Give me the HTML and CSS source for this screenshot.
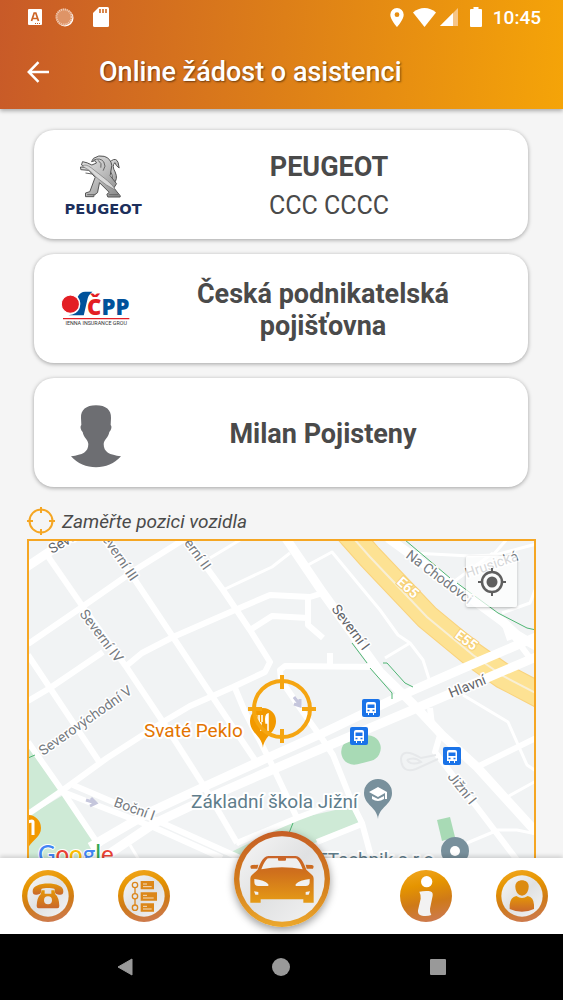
FILE: index.html
```html
<!DOCTYPE html>
<html lang="cs">
<head>
  <meta charset="UTF-8" />
  <meta name="viewport" content="width=device-width, initial-scale=1.0" />
  <title>Online žádost o asistenci</title>
  <link rel="stylesheet" href="styles.css">
</head>
<body>
  <!-- shared gradients -->
  <svg class="defs" width="0" height="0" aria-hidden="true">
    <defs>
      <linearGradient id="ring" x1="0.3" y1="0" x2="0.5" y2="1">
        <stop offset="0" stop-color="#f0a51c" />
        <stop offset="0.3" stop-color="#e59400" />
        <stop offset="0.65" stop-color="#cf7a18" />
        <stop offset="1" stop-color="#cd7a4c" />
      </linearGradient>
      <linearGradient id="ring-big" x1="0" y1="0" x2="0" y2="1">
        <stop offset="0" stop-color="#c65f26" />
        <stop offset="0.5" stop-color="#d17a1c" />
        <stop offset="1" stop-color="#eca82c" />
      </linearGradient>
      <linearGradient id="plate" x1="0" y1="0" x2="1" y2="1">
        <stop offset="0" stop-color="#f6f6f6" />
        <stop offset="0.5" stop-color="#e0e1e2" />
        <stop offset="1" stop-color="#f4f4f4" />
      </linearGradient>
      <linearGradient id="glyph" x1="0" y1="0" x2="0" y2="1">
        <stop offset="0" stop-color="#e59706" />
        <stop offset="1" stop-color="#c9672c" />
      </linearGradient>
      <linearGradient id="car" gradientUnits="userSpaceOnUse" x1="844" y1="90" x2="844" y2="236">
        <stop offset="0" stop-color="#c8622a" />
        <stop offset="0.35" stop-color="#cf6f1c" />
        <stop offset="1" stop-color="#e69c16" />
      </linearGradient>
      <linearGradient id="metal" x1="0" y1="0" x2="1" y2="1">
        <stop offset="0" stop-color="#e8e8e8" />
        <stop offset="0.5" stop-color="#bdbdbd" />
        <stop offset="1" stop-color="#858585" />
      </linearGradient>
    </defs>
  </svg>

  <header class="header">
    <div class="status-bar">
      <div class="status-left">
        <svg width="14" height="17" viewBox="0 0 14 17"><rect width="14" height="16" rx="1" fill="#fff" /><path d="M3.5 12 6.2 4h1.6l2.7 8M4.6 9.5h4.8" fill="none" stroke="#cd6425" stroke-width="1.7" /><path d="M7 14.5h6" stroke="#cd6425" stroke-dasharray="1 1" /></svg>
        <svg width="19" height="19" viewBox="0 0 19 19"><circle cx="10" cy="10" r="8.5" fill="#fff" /><circle cx="9" cy="9" r="8.5" fill="#de9467" /><circle cx="9" cy="9" r="7.5" fill="none" stroke="#f1cdb8" stroke-width="2" stroke-dasharray="1 1" /></svg>
        <svg width="16" height="20" viewBox="0 0 16 20"><path d="M6 0h8.500q1.500 0 1.500 1.500v17q0 1.500-1.500 1.500H1.500Q0 20 0 18.500V6z" fill="#fff" /><path d="M7 2v4M10 2v4M13 2v4" stroke="#d06a22" stroke-width="1.600" /></svg>
      </div>
      <div class="status-right">
        <svg class="pin" width="14" height="19" viewBox="0 0 14 19"><path d="M7 0a6.700 6.700 0 0 0-6.700 6.700C.300 11.500 7 19 7 19s6.700-7.500 6.700-12.300A6.700 6.700 0 0 0 7 0m0 4.300a2.400 2.400 0 1 1 0 4.800 2.400 2.400 0 0 1 0-4.800" fill="#fff" /></svg>
        <svg width="23" height="19" viewBox="0 0 23 19"><path d="M11.500 19 0 4.500C6.500-1.500 16.500-1.500 23 4.500z" fill="#fff" /></svg>
        <svg class="signal" width="18" height="18" viewBox="0 0 18 18"><path d="M18 0v18H0z" fill="#f6c588" /><path d="M13 5v13H0z" fill="#fff" /></svg>
        <svg class="battery" width="12" height="20" viewBox="0 0 12 20"><path d="M3.500 0h5v2H11q1 0 1 1v16q0 1-1 1H1q-1 0-1-1V3q0-1 1-1h2.500z" fill="#fff" /></svg>
        <span class="clock">10:45</span>
      </div>
    </div>
    <div class="toolbar">
      <button type="button" class="back" aria-label="Zpět">
        <svg width="22" height="22" viewBox="0 0 22 22"><path d="M11.500 1.200 1.800 11l9.700 9.800M2 11h20" fill="none" stroke="#fff" stroke-width="2.500" /></svg>
      </button>
      <h1>Online žádost o asistenci</h1>
    </div>
  </header>

  <main class="content">
    <div class="cards">
      <section class="card card-vehicle">
        <svg width="99" height="60" viewBox="65 105 296 180" role="img" aria-label="Peugeot">
          <g fill="url(#metal)" stroke="#555" stroke-width="3" stroke-linejoin="round">
            <path d="M258 122q14-10 20 6l3 16-8-7-5-9q-10 10 1 28 10 22-5 34l-9-9q10-8 1-24-14-25 2-35z" />
            <path d="M198 125l6-10q16-11 32-6 20 6 23 27l-5 31 19 24-8 13 19 23v4h-37l-3-8 7-6-29-29-6 30-11 8v4h-25v-11l13-4 16-43-19-21-24-2-1-8 17 1-14-7 3-10q14 2 28 10l14-6-4-7z" />
          </g>
          <path d="M170 138q10-8 28 6l48 38q19 17 25 29-29-14-56-37l-22-22z" fill="#d9d9d9" stroke="#777" stroke-width="2" />
          <path d="M203 121q21-10 32 5 8 12-2 26m-15-31q13 9 8 22M180 159l20 3M185 224h25M251 224h27" fill="none" stroke="#666" stroke-width="3" />
          <text class="peugeot-name" x="233" y="282" text-anchor="middle">PEUGEOT</text>
        </svg>
        <div class="card-text">
          <h2>PEUGEOT</h2>
          <p>CCC CCCC</p>
        </div>
      </section>
      <section class="card">
        <svg width="72" height="37" viewBox="105 510 215 110" role="img" aria-label="ČPP">
          <path d="M158 530q8-15 22-15h22q-13 9-16 27l-10 43h-46q26-2 33-20 7-18-5-35z" fill="#00529b" />
          <circle cx="136" cy="552" r="27" fill="#e31e24" stroke="#fff" stroke-width="3" />
          <text class="cpp-name" x="186" y="585"><tspan fill="#e31e24">Č</tspan><tspan fill="#00529b">PP</tspan></text>
          <path d="M114 595h198" stroke="#e31e24" stroke-width="4" />
          <text class="cpp-sub" x="213" y="615" text-anchor="middle">IENNA INSURANCE GROU</text>
        </svg>
        <div class="card-text">
          <h2>Česká podnikatelská pojišťovna</h2>
        </div>
      </section>
      <section class="card">
        <svg width="52" height="70" viewBox="135 95 156 210" aria-hidden="true">
          <path d="M213 117c-30 0-46 14-45 38l1 21c-5 4-1 17 4 21 3 17 16 23 17 36 0 25-17 32-52 37 38 44 112 44 150 0-35-5-52-12-52-37 1-13 14-19 17-36 5-4 9-17 4-21l1-21c1-24-15-38-45-38z" fill="#6d6e72" />
        </svg>
        <div class="card-text">
          <h2>Milan Pojisteny</h2>
        </div>
      </section>
    </div>

    <p class="hint">
      <svg width="28" height="28" viewBox="0 0 28 28" aria-hidden="true"><circle cx="14" cy="14" r="11.500" /><path d="M14 0v6M14 22v6M0 14h6M22 14h6" /></svg>
      <span>Zaměřte pozici vozidla</span>
    </p>

    <div class="map">
      <svg class="map-canvas" viewBox="29 541 505 317" preserveAspectRatio="xMidYMin slice">
        <!-- parks -->
        <g fill="#ceead6">
          <path d="M28 744l35 48-35 24zM28 816l37-22 34 50-14 14H28z" />
          <path d="M225 855l75-37 53-12 8 17-81 35z" />
        </g>
        <g fill="#a8dab5">
          <rect x="341" y="737" width="40" height="26" rx="13" transform="rotate(-15 361 750)" />
          <path d="M437 820l13-3 5 20-13 4z" />
        </g>
        <!-- motorway -->
        <path class="motorway-edge" d="M338 521L355 540 370 557 427 617 473 655 503 676 545 698" />
        <path class="motorway" d="M338 521L355 540 370 557 427 617 473 655 503 676 545 698" />
        <path class="motorway-gap" d="M338 521L355 540 370 557 427 617 473 655 503 676 545 698" />
        <!-- streets -->
        <g class="street thin">
          <path d="M210 558L240 540M223 590L272 567 290 553M308 565L332 552 380 610 398 635 410 643 423 660 430 682M410 643L385 658" />
          <path d="M413 553L470 556 495 555 540 543M493 555L508 538M502 613L530 603 535 590M452 583L493 553" />
          <path d="M463 695L508 722 527 765 536 771M507 797L536 781M467 843L498 830 517 830 536 834" />
          <path d="M242 840L237 845M130 845L139 860" />
        </g>
        <g class="street">
          <path d="M47 555L83 607 127 668 163 722 202 783 237 843" />
          <path d="M28 655L50 688 100 763M103 538L135 580 173 637 218 705 257 763" />
          <path d="M28 644L82 607 135 570 183 540M28 701L50 688 103 652" />
          <path d="M125 667L142 653 173 637 235 610 270 595 310 597 323 593" />
          <path d="M183 535L223 590 250 630 270 662 265 672 233 687 190 706 163 722 107 758 63 790 28 814" />
          <path d="M308 597L308 625 323 638M250 630L272 616 308 618M330 653L330 666M380 667L285 666 280 670 281 680 300 708 323 740 333 755 353 805 362 823 372 860" />
          <path d="M235 688L245 712 262 745 273 767 297 818M237 843L297 818 345 800M317 842L362 824" />
          <path d="M28 742L63 792 100 847M73 785L160 822 240 858M63 792L153 827 222 858" />
          <path d="M477 767L536 738M430 708L432 725 440 735 435 752 470 798 517 860" />
          <path d="M503 619L510 640M503 622L530 658" />
        </g>
        <g class="street wide">
          <path d="M25 568L46 554 74 536M285 537L323 593 380 672 413 704 442 735 477 767 536 832" />
          <path d="M388 538L453 585 503 622 517 635 536 646" />
          <path d="M536 637L473 664 400 696 323 733 267 758 210 784 150 812 90 847" />
          <path d="M536 657L473 684 410 711 323 748 267 772 210 797 155 823 100 860" />
        </g>
        <path class="loop" d="M436 755l-15 3q-19-11-20 1 1 15 15 10l22-10M407 760q8-4 14 2-10 4-14-2" />
        <!-- footpaths -->
        <g class="path">
          <path d="M405 540L450 578M457 583L498 613 527 628 536 630M352 643L367 663M370 668L392 693v6M383 663h4l18 20 8 4M293 823l-4 10M28 758l7-3" />
        </g>
        <!-- one way arrows -->
        <g fill="none" stroke="#c5c6dc" stroke-width="3">
          <path d="M294 697l6 8m-6-1l6 2 0-7M86 800l10 3m-5-5l5 5-6 3" />
        </g>

        <!-- street names -->
        <g class="label">
          <text class="dark" transform="translate(52 554) rotate(-30)">Severní IV</text>
          <text transform="translate(131 582) rotate(56)" text-anchor="end">Severní III</text>
          <text transform="translate(204 571) rotate(54)" text-anchor="end">Severní II</text>
          <text transform="translate(79 614) rotate(53)">Severní IV</text>
          <text class="dark" transform="translate(331 609) rotate(53)">Severní I</text>
          <text transform="translate(43 756) rotate(-35)">Severovýchodní V</text>
          <text transform="translate(113 806) rotate(20)">Boční I</text>
          <text class="dark" transform="translate(451 698) rotate(-22)">Hlavní</text>
          <text transform="translate(405 557) rotate(37)">Na Chodovci</text>
          <text transform="translate(467 578) rotate(-19)">Hrusická</text>
          <text transform="translate(447 777) rotate(51)">Jižní I</text>
        </g>
        <g class="road-no">
          <text transform="translate(396 583) rotate(42)">E65</text>
          <text transform="translate(454 637) rotate(36)">E55</text>
        </g>

        <!-- bus stops -->
        <g id="bus">
          <rect x="362" y="699" width="18" height="18" rx="2" fill="#1a73e8" />
          <path d="M366 704q0-2 2-2h6q2 0 2 2v9h-2v2h-1v-2h-4v2h-1v-2h-2zm1.500.500v3.500h7v-3.500z" fill="#fff" fill-rule="evenodd" />
          <path d="M367.500 710.500h2M372.500 710.500h2" stroke="#1a73e8" stroke-width="1.500" />
        </g>
        <use href="#bus" x="-12" y="28" />
        <use href="#bus" x="81" y="48" />

        <!-- places -->
        <g class="place">
          <text class="food" x="144" y="737">Svaté Peklo</text>
          <text x="191" y="808">Základní škola Jižní</text>
          <text x="434" y="866" text-anchor="end">TTechnik s.r.o</text>
        </g>
        <g>
          <path d="M263 748c-1-12-13-15-13-27a13 13 0 0 1 26 0c0 12-12 15-13 27z" fill="#f29900" />
          <path d="M259 715v6q0 2 2 2v8M262 715v7M256.500 715v5q0 2 3 2M268 731v-8h-2q-1-8 2-9z" fill="#fff" stroke="#fff" stroke-width="1.500" />
          <path d="M28 848c5-9 13-11 13-20a13 13 0 0 0-13-13z" fill="#f29900" />
          <path d="M28 822q5-2 5 0v13" fill="none" stroke="#fff" stroke-width="3" />
          <path d="M378 819c-1-12-14-14-14-26a14 14 0 0 1 28 0c0 12-13 14-14 26z" fill="#78909c" />
          <path d="M378 787l-9 5 9 5 7-4v6h2v-7zM372 796v3q6 4 12 0v-3l-6 3z" fill="#fff" />
          <circle cx="455" cy="851" r="14" fill="#78909c" />
          <circle cx="455" cy="851" r="5" fill="#fff" />
        </g>

        <!-- selected position -->
        <g fill="none" stroke="#f5a511" stroke-width="4">
          <circle cx="282" cy="709" r="28" />
          <path d="M282 675v14M282 729v14M248 709h14M302 709h14" />
        </g>
        <text class="google" x="38" y="863"><tspan fill="#4285f4">G</tspan><tspan fill="#ea4335">o</tspan><tspan fill="#fbbc04">o</tspan><tspan fill="#4285f4">g</tspan><tspan fill="#34a853">l</tspan><tspan fill="#ea4335">e</tspan></text>
      </svg>
      <button type="button" class="locate" aria-label="Moje poloha">
        <svg width="28" height="28" viewBox="0 0 28 28"><circle cx="14" cy="14" r="10" fill="none" stroke="#5f5f5f" stroke-width="2.500" /><circle cx="14" cy="14" r="5.500" fill="#5f5f5f" /><path d="M14 0v4M14 24v4M0 14h4M24 14h4" stroke="#5f5f5f" stroke-width="2" /></svg>
      </button>
    </div>
  </main>

  <nav class="tabs">
    <div class="tab-group">
      <button type="button" aria-label="Telefon">
        <svg viewBox="67 134 156 156">
          <circle cx="145" cy="212" r="78" fill="url(#ring)" />
          <circle cx="145" cy="212" r="62" fill="url(#plate)" />
          <path d="M99 198c-2-31 94-31 92 0 0 9-4 11-13 10-8-1-14-3-13-17-9-4-31-4-40 0 1 14-5 16-13 17-9 1-13-1-13-10z" fill="url(#glyph)" />
          <path d="M126 195h9v10h20v-10h9l3 12q11 9 12 35 0 7-6 7h-56q-6 0-6-7 1-26 12-35z" fill="url(#glyph)" />
          <circle cx="145" cy="225" r="12" fill="#e6e6e6" />
        </svg>
      </button>
      <button type="button" aria-label="Průběh">
        <svg viewBox="354 134 156 156">
          <circle cx="432" cy="212" r="78" fill="url(#ring)" />
          <circle cx="432" cy="212" r="62" fill="url(#plate)" />
          <g fill="none" stroke="#db861c" stroke-width="4"><circle cx="405" cy="179" r="8" /><circle cx="405" cy="213" r="8" /><circle cx="405" cy="247" r="8" /><path d="M405 187v18M405 221v18" /></g>
          <path d="M422 167h40v25h-40zM422 201h49v25h-49zM422 234h40v25h-40z" fill="#dc8719" />
          <path d="M429 176h12M429 184h26M429 210h12M429 218h32M429 243h12M429 251h26" stroke="#f3dfc4" stroke-width="3" />
        </svg>
      </button>
    </div>
    <button type="button" class="tab-main" aria-label="Asistence">
      <svg viewBox="700 19 288 288">
        <circle cx="844" cy="163" r="144" fill="url(#ring-big)" />
        <circle cx="844" cy="163" r="128" fill="url(#plate)" />
        <path d="M771 135q10-28 20-36 5-5 12-5h82q7 0 12 5 10 8 20 36l18 17q4 4 4 10v72h-31v-10H780v10h-31v-72q0-6 4-10z" fill="url(#car)" />
        <path d="M782 134q7-20 15-29 3-4 8-4h27v4q0 3 3 3h18q3 0 3-3v-4h27q5 0 8 4 8 9 15 29-62-12-124 0z" fill="#efefef" />
        <path d="M749 126q0-4 6-5l18-1-3 12h-19zM939 126q0-4-6-5l-18-1 3 12h19z" fill="#cc6b20" />
        <path d="M761 163q30 3 42 16v5h-30q-12 0-12-11zM927 163q-30 3-42 16v5h30q12 0 12-11zM760 200l13 2v8h-9zM928 200l-13 2v8h9z" fill="#f1f1f1" />
      </svg>
    </button>
    <div class="tab-group tab-group-right">
      <button type="button" aria-label="Informace">
        <svg viewBox="359 134 156 156">
          <circle cx="437" cy="212" r="78" fill="url(#ring)" />
          <circle cx="439" cy="169" r="17" fill="#fff" />
          <path d="M417 199q13-3 28-2 14 1 12 14l-8 39q-1 12 4 19-12 4-28 2-14-2-12-16l8-35q1-12-4-21z" fill="#f2f2f2" />
        </svg>
      </button>
      <button type="button" aria-label="Profil">
        <svg viewBox="649 134 156 156">
          <circle cx="727" cy="212" r="78" fill="url(#ring)" />
          <circle cx="727" cy="212" r="62" fill="url(#plate)" />
          <path d="M707 183c0-24 40-24 40 0 0 14-7 28-20 28s-20-14-20-28z" fill="#dc8b10" />
          <path d="M710 212q17 12 34 0 18 4 19 26v13q-36 17-73 0v-13q2-22 20-26z" fill="url(#glyph)" />
        </svg>
      </button>
    </div>
  </nav>

  <div class="system-nav">
    <button type="button" aria-label="Zpět"><svg width="18" height="18" viewBox="0 0 18 18"><path d="M16 1v16L2 9z" fill="#999" stroke="#999" stroke-linejoin="round" /></svg></button>
    <button type="button" aria-label="Domů"><svg width="18" height="18" viewBox="0 0 18 18"><circle cx="9" cy="9" r="9" fill="#999" /></svg></button>
    <button type="button" aria-label="Přehled"><svg width="18" height="18" viewBox="0 0 18 18"><rect x="1" y="1" width="16" height="16" rx="1" fill="#999" /></svg></button>
  </div>
</body>
</html>
```

FILE: styles.css
```css
* {
  box-sizing: border-box;
}
body {
  margin: 0;
  height: 100vh;
  display: flex;
  flex-direction: column;
  background-color: #f5f5f5;
  font-family: Roboto, sans-serif;
  color: #4a4a4a;
}
h1, h2, p {
  margin: 0;
}
button {
  padding: 0;
  border: none;
  background: none;
  cursor: pointer;
}
svg {
  display: block;
}
.defs {
  position: absolute;
}

/* header */
.header {
  flex: none;
  background: linear-gradient(95deg, #c85a28, #dd7f18 50%, #f5a408);
  color: #fff;
  box-shadow: 0 2px 4px rgba(0, 0, 0, 0.3);
  z-index: 1;
}
.status-bar {
  height: 34px;
  padding: 0 22px 0 28px;
  display: flex;
  justify-content: space-between;
  align-items: center;
}
.status-left, .status-right {
  display: flex;
  align-items: center;
}
.status-left {
  gap: 13px;
}
.status-left svg:last-child {
  margin-left: 6px;
}
.pin {
  margin-right: 9px;
}
.signal {
  margin: 0 12px 0 4px;
}
.battery {
  margin-right: 11px;
}
.clock {
  font-size: 19px;
  font-weight: 500;
}
.toolbar {
  height: 75px;
  padding: 0 27px;
  display: flex;
  align-items: center;
  gap: 50px;
}
.toolbar h1 {
  font-size: 27px;
  font-weight: 500;
  text-shadow: 1px 1px 2px rgba(0, 0, 0, 0.5);
}

/* content */
.content {
  flex: 1;
  min-height: 0;
  padding-top: 21px;
  display: flex;
  flex-direction: column;
  overflow: hidden;
}
.cards {
  flex: none;
  padding: 0 35px 0 34px;
  display: flex;
  flex-direction: column;
  gap: 15px;
}
.card {
  min-height: 109px;
  padding-right: 40px;
  display: grid;
  grid-template-columns: 124px 1fr;
  align-items: center;
  justify-items: center;
  background-color: #fff;
  border-radius: 20px;
  box-shadow: 0 1px 4px rgba(0, 0, 0, 0.35);
}
.card-vehicle {
  padding-right: 28px;
}
.card > svg {
  overflow: visible;
}
.card-text {
  padding-top: 3px;
  text-align: center;
}
.card h2 {
  font-size: 27px;
  line-height: 32px;
  font-weight: 700;
}
.card p {
  margin-top: 7px;
  font-size: 25px;
  line-height: 32px;
}
.peugeot-name {
  font: bold 44px "DejaVu Sans", sans-serif;
  fill: #1d2f5c;
}
.cpp-name {
  font: 800 66px "Open Sans", sans-serif;
}
.cpp-sub {
  font: 16px Roboto, sans-serif;
  fill: #333;
}
.hint {
  flex: none;
  padding: 20px 27px 4px;
  display: flex;
  align-items: center;
  gap: 7px;
  font-size: 19px;
  font-style: italic;
}
.hint svg {
  fill: none;
  stroke: #f5a623;
  stroke-width: 2;
}

/* map */
.map {
  flex: 1;
  min-height: 0;
  margin: 0 27px;
  position: relative;
  border: 2px solid #f5a623;
  border-bottom: none;
  background-color: #f1f3f4;
  overflow: hidden;
}
.map-canvas {
  width: 100%;
  height: 100%;
}
.street {
  fill: none;
  stroke: #fff;
  stroke-width: 6;
  stroke-linejoin: round;
}
.street.thin {
  stroke-width: 3;
}
.street.wide {
  stroke-width: 9;
}
.motorway, .motorway-edge, .motorway-gap {
  fill: none;
  stroke: #fde293;
  stroke-width: 24;
}
.motorway-edge {
  stroke: #f9d27c;
  stroke-width: 26;
}
.motorway-gap {
  stroke: #f8efd6;
  stroke-width: 2;
}
.loop {
  fill: none;
  stroke: #e6e8ea;
  stroke-width: 2;
}
.path {
  fill: none;
  stroke: #4fb573;
  stroke-width: 1;
}
.label {
  font-size: 14px;
  fill: #757a80;
  stroke: #fff;
  stroke-width: 3;
  stroke-linejoin: round;
  paint-order: stroke;
}
.label .dark {
  fill: #5f6368;
}
.road-no {
  font-size: 14px;
  font-weight: 700;
  fill: #fff;
  stroke: #f6cf74;
  stroke-width: 2;
  paint-order: stroke;
}
.place {
  font-size: 19px;
  fill: #607d8b;
  stroke: #fff;
  stroke-width: 4;
  stroke-linejoin: round;
  paint-order: stroke;
}
.place .food {
  fill: #e37400;
}
.google {
  font: 500 24px Lato, sans-serif;
  stroke: #fff;
  stroke-width: 2;
  paint-order: stroke;
}
.locate {
  position: absolute;
  top: 15px;
  right: 17px;
  width: 51px;
  height: 51px;
  display: grid;
  place-items: center;
  background-color: rgba(255, 255, 255, 0.7);
  border-radius: 2px;
  box-shadow: 0 1px 3px rgba(0, 0, 0, 0.25);
}

/* bottom tabs */
.tabs {
  flex: none;
  height: 76px;
  display: grid;
  grid-template-columns: 1fr 96px 1fr;
  background-color: #fff;
  box-shadow: 0 -2px 4px rgba(0, 0, 0, 0.15);
  z-index: 1;
}
.tab-group {
  padding-left: 22px;
  display: flex;
  align-items: center;
  gap: 44px;
}
.tab-group button {
  width: 52px;
}
.tab-group-right {
  padding: 0 15px 0 0;
  justify-content: flex-end;
}
.tab-main {
  width: 96px;
  height: 96px;
  margin-top: -27px;
  border-radius: 50%;
  box-shadow: 0 3px 8px rgba(0, 0, 0, 0.4);
}
.system-nav {
  flex: none;
  height: 66px;
  padding: 0 47px;
  display: grid;
  grid-template-columns: 1fr 1fr 1fr;
  align-items: center;
  justify-items: center;
  background-color: #000;
}
```
